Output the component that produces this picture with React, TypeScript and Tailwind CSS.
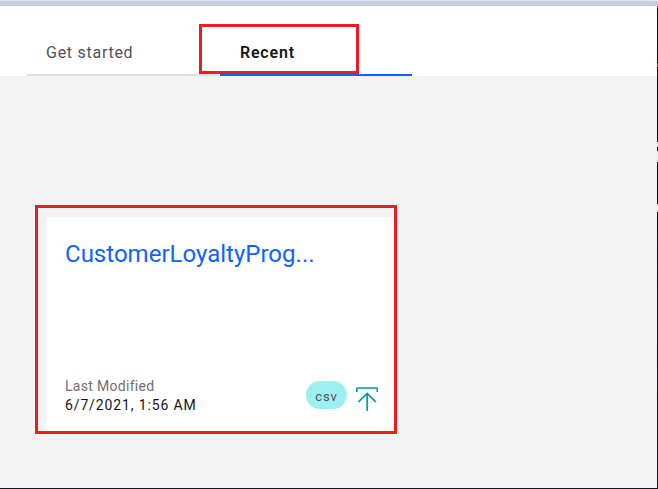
function UploadIcon() {
  return (
    <svg className="mt-[9px] ml-[9px] h-[25px] w-[22px] shrink-0" viewBox="0 0 22 25" fill="none" stroke="#009d9a" strokeWidth="1.7">
      <path d="M0.8 6V3.1Q0.8 2 1.9 2H20.2Q21.3 2 21.3 3.1V6" />
      <path d="M11.2 25.9V7.6M2.5 15.8L11.2 7.5L19.7 15.8" />
    </svg>
  );
}

function Tabs() {
  return (
    <nav className="flex h-[70px] gap-px bg-white pl-[27px] text-[16px]">
      <div className="w-[192px] border-b-2 border-[#e0e0e0] pt-[35px] pl-[19px] leading-6 text-[#525252]">
        <span className="tracking-[0.73px]">Get started</span>
      </div>
      <div className="w-[192px] border-b-2 border-[#0f62fe] pt-[35px] pl-[20px] leading-6 font-semibold text-[#161616]">
        <span className="tracking-[0.8px]">Recent</span>
      </div>
    </nav>
  );
}

function FileCard() {
  return (
    <article className="mt-[141px] ml-[46px] flex h-[214px] w-[348px] flex-col justify-between bg-white pt-[21px] pl-[19px]">
      <h2 className="text-[24px] leading-8 tracking-[0.01px] text-[#0f62fe]">CustomerLoyaltyProg...</h2>
      <div className="flex h-[54px] items-start">
        <div className="w-[241px] text-[14px] leading-[19px] whitespace-nowrap">
          <p className="tracking-[0.3px] text-[#6f6f6f]">Last Modified</p>
          <p className="tracking-[0.87px] text-[#161616]">6/7/2021, 1:56 AM</p>
        </div>
        <span className="mt-[4px] flex h-[28px] w-[41px] shrink-0 items-center justify-center rounded-full bg-[#9ef0f0] pt-[3px] text-[13px] tracking-[0.9px] text-[#525252]">csv</span>
        <UploadIcon />
      </div>
    </article>
  );
}

export default function App() {
  return (
    <div className="relative flex h-[489px] w-[658px] flex-col overflow-hidden bg-[#f3f3f3] font-['Roboto',sans-serif]">
      <div className="h-[6px] shrink-0 border-t border-[#e4e5e8] bg-[#c6cee0]" />
      <div className="flex min-h-0 flex-1">
        <main className="w-[657px]">
          <Tabs />
          <FileCard />
        </main>
        <aside className="flex w-px flex-col bg-[#080b0e]">
          <i className="h-[2px] bg-[#ed1c24]" />
          <i className="mt-[55px] h-[4px] bg-[#ed1c24]" />
          <i className="mt-[75px] h-[5px] bg-[#e8edf0]" />
          <i className="mt-[4px] h-[11px] bg-[#e8edf0]" />
          <i className="mt-[42px] h-[8px] bg-[#f5e9d2]" />
          <i className="flex-1 bg-gradient-to-b from-[#080b0e] to-[#161625]" />
        </aside>
      </div>
      <div className="h-px shrink-0 bg-[#161625]" />
      <div className="absolute top-[24px] left-[199px] h-[50px] w-[160px] border-3 border-[#ed1c24]" />
      <div className="absolute top-[205px] left-[35px] h-[229px] w-[362px] border-3 border-[#ed1c24]" />
    </div>
  );
}
